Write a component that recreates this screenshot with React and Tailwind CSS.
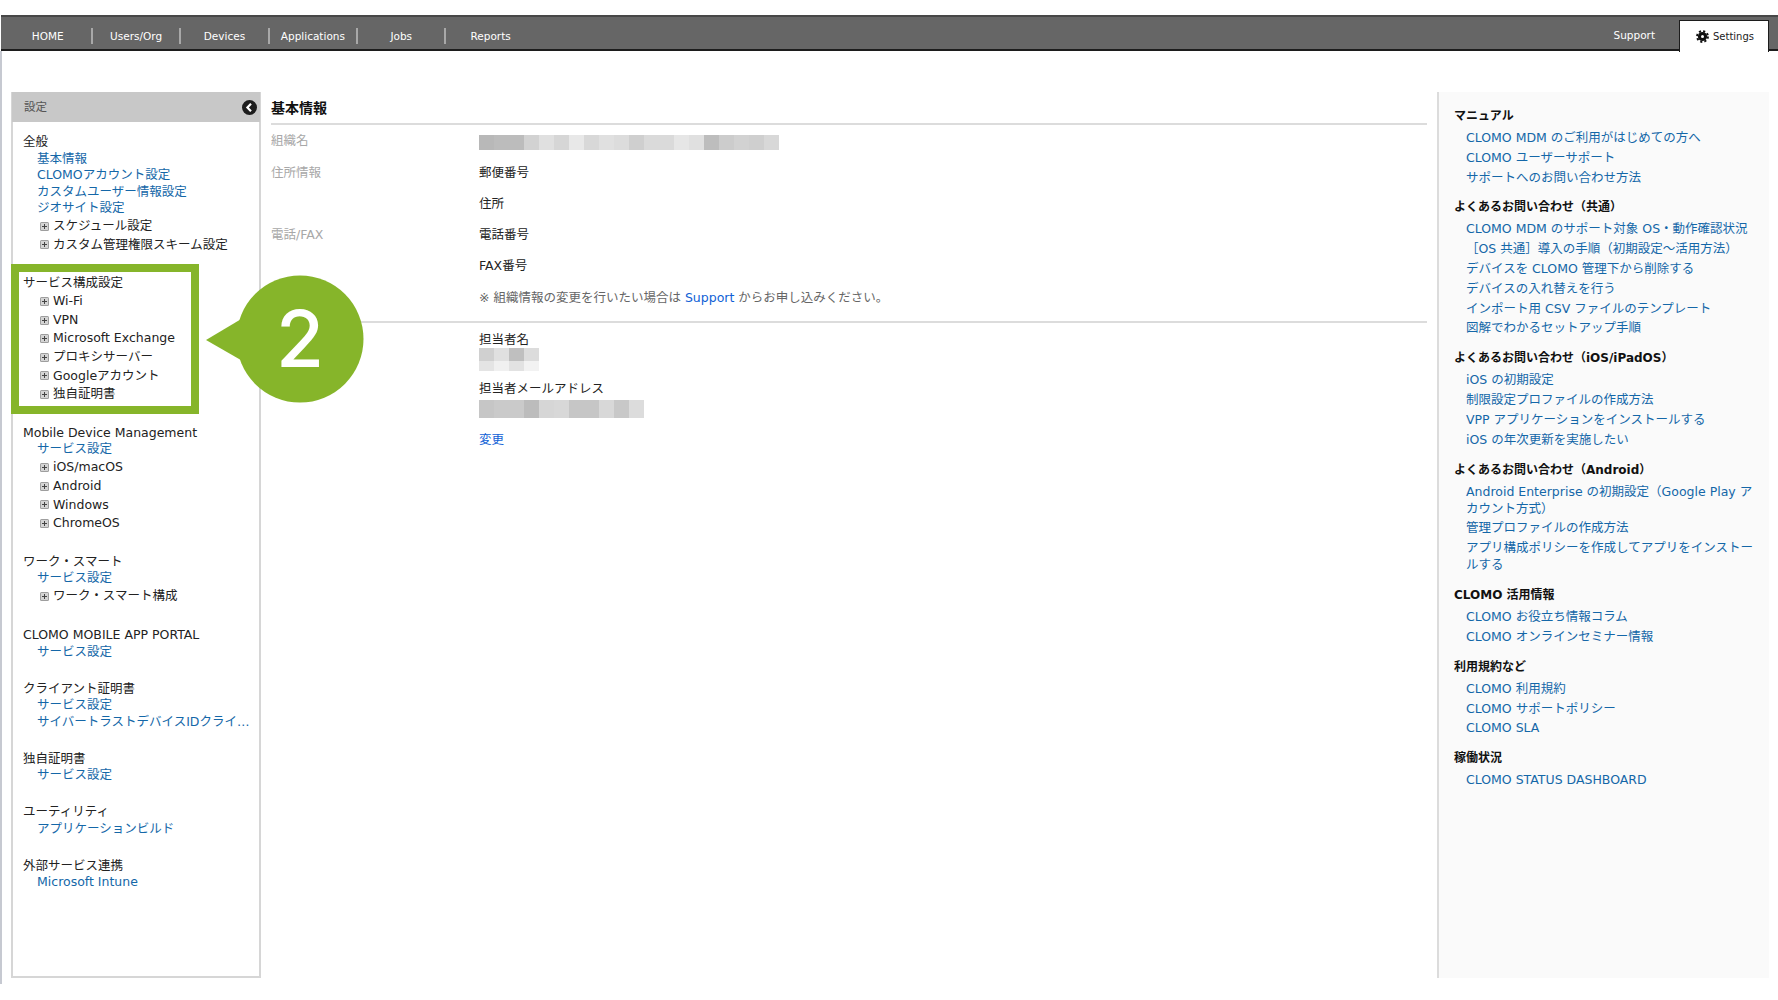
const navItems = ['HOME', 'Users/Org', 'Devices', 'Applications', 'Jobs', 'Reports'];

const sideSections = [
    { title: '全般', links: ['基本情報', 'CLOMOアカウント設定', 'カスタムユーザー情報設定', 'ジオサイト設定'], tree: ['スケジュール設定', 'カスタム管理権限スキーム設定'] },
    { title: 'サービス構成設定', links: [], tree: ['Wi-Fi', 'VPN', 'Microsoft Exchange', 'プロキシサーバー', 'Googleアカウント', '独自証明書'] },
    { title: 'Mobile Device Management', links: ['サービス設定'], tree: ['iOS/macOS', 'Android', 'Windows', 'ChromeOS'] },
    { title: 'ワーク・スマート', links: ['サービス設定'], tree: ['ワーク・スマート構成'] },
    { title: 'CLOMO MOBILE APP PORTAL', links: ['サービス設定'], tree: [] },
    { title: 'クライアント証明書', links: ['サービス設定', 'サイバートラストデバイスIDクライアント証明書'], tree: [] },
    { title: '独自証明書', links: ['サービス設定'], tree: [] },
    { title: 'ユーティリティ', links: ['アプリケーションビルド'], tree: [] },
    { title: '外部サービス連携', links: ['Microsoft Intune'], tree: [] },
];

const helpSections = [
    { title: 'マニュアル', links: ['CLOMO MDM のご利用がはじめての方へ', 'CLOMO ユーザーサポート', 'サポートへのお問い合わせ方法'] },
    { title: 'よくあるお問い合わせ（共通）', links: ['CLOMO MDM のサポート対象 OS・動作確認状況', '［OS 共通］導入の手順（初期設定〜活用方法）', 'デバイスを CLOMO 管理下から削除する', 'デバイスの入れ替えを行う', 'インポート用 CSV ファイルのテンプレート', '図解でわかるセットアップ手順'] },
    { title: 'よくあるお問い合わせ（iOS/iPadOS）', links: ['iOS の初期設定', '制限設定プロファイルの作成方法', 'VPP アプリケーションをインストールする', 'iOS の年次更新を実施したい'] },
    { title: 'よくあるお問い合わせ（Android）', links: ['Android Enterprise の初期設定（Google Play アカウント方式）', '管理プロファイルの作成方法', 'アプリ構成ポリシーを作成してアプリをインストールする'] },
    { title: 'CLOMO 活用情報', links: ['CLOMO お役立ち情報コラム', 'CLOMO オンラインセミナー情報'] },
    { title: '利用規約など', links: ['CLOMO 利用規約', 'CLOMO サポートポリシー', 'CLOMO SLA'] },
    { title: '稼働状況', links: ['CLOMO STATUS DASHBOARD'] },
];

const orgMosaic = ['#b8b8b8', '#bcbcbc', '#bcbcbc', '#d2d2d2', '#e0e0e0', '#d6d6d6', '#e8e8e8', '#d8d8d8', '#e0e0e0', '#dcdcdc', '#cfcfcf', '#dadada', '#dadada', '#e6e6e6', '#e0e0e0', '#bdbdbd', '#cccccc', '#d2d2d2', '#cfcfcf', '#d8d8d8'];
const nameMosaicTop = ['#d0d0d0', '#e0e0e0', '#bfbfbf', '#dcdcdc'];
const nameMosaicBottom = ['#e4e4e4', '#f0f0f0', '#e2e2e2', '#f2f2f2'];
const mailMosaic = ['#c6c6c6', '#cacaca', '#cacaca', '#bcbcbc', '#d6d6d6', '#d8d8d8', '#c6c6c6', '#c6c6c6', '#d8d8d8', '#c8c8c8', '#dcdcdc'];

function Mosaic({ colors, className }) {
    return (
        <div className={`flex ${className}`}>
            {colors.map((c, i) => (
                <div key={i} className="w-[15px] h-full" style={{ backgroundColor: c }} />
            ))}
        </div>
    );
}

function TreeIcon() {
    return (
        <svg width="9" height="9" viewBox="0 0 9 9" className="shrink-0">
            <rect x="0" y="0" width="9" height="9" rx="1.5" fill="#9e9e9e" />
            <rect x="1" y="1" width="7" height="7" fill="#d4d4d4" />
            <path d="M4.5 2v5M2 4.5h5" stroke="#444" strokeWidth="1" />
        </svg>
    );
}

function GearIcon() {
    return (
        <svg width="13" height="13" viewBox="0 0 13 13" className="shrink-0">
            <circle cx="6.5" cy="6.5" r="4.6" fill="#111" />
            <circle cx="6.5" cy="6.5" r="5.4" fill="none" stroke="#111" strokeWidth="2" strokeDasharray="2.1 2.14" />
            <circle cx="6.5" cy="6.5" r="1.5" fill="#fff" />
        </svg>
    );
}

function SideSection({ section }) {
    return (
        <div className="mb-[20.6px]">
            <div className="h-[16.5px] leading-[16.5px] text-[#222]">{section.title}</div>
            {section.links.map((l) => (
                <a key={l} className="block h-[16.5px] leading-[16.5px] pl-[14px] pr-[8px] text-[#1467a8] truncate">{l}</a>
            ))}
            {section.tree.length > 0 && (
                <div className="pt-[0.5px] pb-[0.5px]">
                    {section.tree.map((t) => (
                        <div key={t} className="flex items-center h-[18.6px] pl-[17px] gap-[4px] text-[#222]">
                            <TreeIcon />
                            <span>{t}</span>
                        </div>
                    ))}
                </div>
            )}
        </div>
    );
}

function InfoRow({ label, children }) {
    return (
        <div className="flex items-center h-[31.3px]">
            <div className="w-[208px] text-[#a8a8a8]">{label}</div>
            <div className="text-[#222]">{children}</div>
        </div>
    );
}

export default function App() {
    return (
        <div className="relative w-[1778px] h-[1000px] overflow-hidden bg-white text-[12.5px] font-['DejaVu_Sans','Noto_Sans_CJK_JP',sans-serif]">
            {/* top nav */}
            <div className="pt-[15px] pl-[1px]">
                <div className="flex items-center h-[36px] bg-[#666] border-t-2 border-t-[#474747] border-b-2 border-b-[#1c1c1c] text-white text-[10.5px]">
                    <div className="flex ml-[3.5px] mt-[6px]">
                        {navItems.map((item, i) => (
                            <div key={item} className={`w-[88.4px] h-[16px] leading-[16px] text-center ${i < 5 ? 'border-r-2 border-r-[#a8a8a8]' : ''}`}>
                                {item}
                            </div>
                        ))}
                    </div>
                    <div className="ml-auto mr-[24px] mt-[6px] text-[10.5px]">Support</div>
                    <div className="flex items-center justify-center gap-[4px] w-[90px] h-[32px] mt-[4px] mr-[9px] -mb-[2px] pl-[2px] bg-white text-[#222] text-[10px] border-t border-l border-r border-[#1c1c1c]">
                        <GearIcon />
                        <span>Settings</span>
                    </div>
                </div>
            </div>

            <div className="flex h-[886px] mt-[41px] ml-[11px]">
                {/* left sidebar */}
                <div className="flex flex-col w-[250px] border-2 border-t-0 border-[#d6d6d6]">
                    <div className="flex items-center justify-between h-[30px] -mx-[1px] pl-[12px] pr-[3px] pt-[1px] bg-[#c8c8c8] text-[#555] text-[11.5px]">
                        <span>設定</span>
                        <svg width="15" height="15" viewBox="0 0 15 15">
                            <circle cx="7.5" cy="7.5" r="7.5" fill="#1d1d1d" />
                            <path d="M9 3.8 5.4 7.5 9 11.2" fill="none" stroke="#fff" strokeWidth="2.2" />
                        </svg>
                    </div>
                    <div className="pt-[12px] pl-[10px]">
                        {sideSections.map((s) => (
                            <SideSection key={s.title} section={s} />
                        ))}
                    </div>
                </div>

                {/* main */}
                <div className="w-[1156px] ml-[10px]">
                    <h1 className="h-[33px] leading-[33px] font-bold text-[14px] text-[#111] border-b-2 border-b-[#dcdcdc]">基本情報</h1>
                    <div className="pt-[1px]">
                        <InfoRow label="組織名">
                            <Mosaic colors={orgMosaic} className="h-[15px] mt-[2px]" />
                        </InfoRow>
                        <InfoRow label="住所情報">郵便番号</InfoRow>
                        <InfoRow label="">住所</InfoRow>
                        <InfoRow label="電話/FAX">電話番号</InfoRow>
                        <InfoRow label="">FAX番号</InfoRow>
                        <InfoRow label="">
                            <span className="text-[#666]">※ 組織情報の変更を行いたい場合は <a className="text-[#0f5fd6]">Support</a> からお申し込みください。</span>
                        </InfoRow>
                    </div>
                    <div className="mt-[7px] border-t-2 border-t-[#dcdcdc] pl-[208px] pt-[8px]">
                        <div className="h-[17px] leading-[17px] text-[#222]">担当者名</div>
                        <Mosaic colors={nameMosaicTop} className="h-[13px]" />
                        <Mosaic colors={nameMosaicBottom} className="h-[10px]" />
                        <div className="mt-[9px] h-[17px] leading-[17px] text-[#222]">担当者メールアドレス</div>
                        <Mosaic colors={mailMosaic} className="h-[18px] mt-[3px]" />
                        <a className="block mt-[13px] text-[#0f5fd6]">変更</a>
                    </div>
                </div>

                {/* right help panel */}
                <div className="w-[332px] ml-[10px] pt-[16px] pl-[15px] bg-[#fafafa] border-l-2 border-l-[#dcdcdc]">
                    {helpSections.map((s) => (
                        <div key={s.title} className="mb-[13.9px]">
                            <div className="h-[17px] leading-[17px] mb-[4px] font-bold text-[12px] text-[#111]">{s.title}</div>
                            {s.links.map((l) => (
                                <a key={l} className="block w-[296px] ml-[12px] mb-[2.8px] leading-[17px] text-[#1467a8]">{l}</a>
                            ))}
                        </div>
                    ))}
                </div>
            </div>

            {/* screenshot edge */}
            <div className="absolute left-0 top-[51px] w-[2px] h-[933px] bg-[#c6c9d1]" />

            {/* step highlight */}
            <div className="absolute left-[11px] top-[264px] w-[188px] h-[150px] border-[8px] border-[#86b52a]" />
            <div className="absolute left-[205px] top-[275px] w-[160px] h-[130px]">
                <svg width="160" height="130" viewBox="0 0 160 130" className="absolute inset-0">
                    <circle cx="95" cy="64" r="63.5" fill="#86b52a" />
                    <path d="M1 65 48 37V92Z" fill="#86b52a" />
                </svg>
                <div className="absolute inset-0 pl-[30px] pb-[3px] flex items-center justify-center text-white text-[78px] leading-none font-['Inter',sans-serif] font-medium">2</div>
            </div>
        </div>
    );
}
